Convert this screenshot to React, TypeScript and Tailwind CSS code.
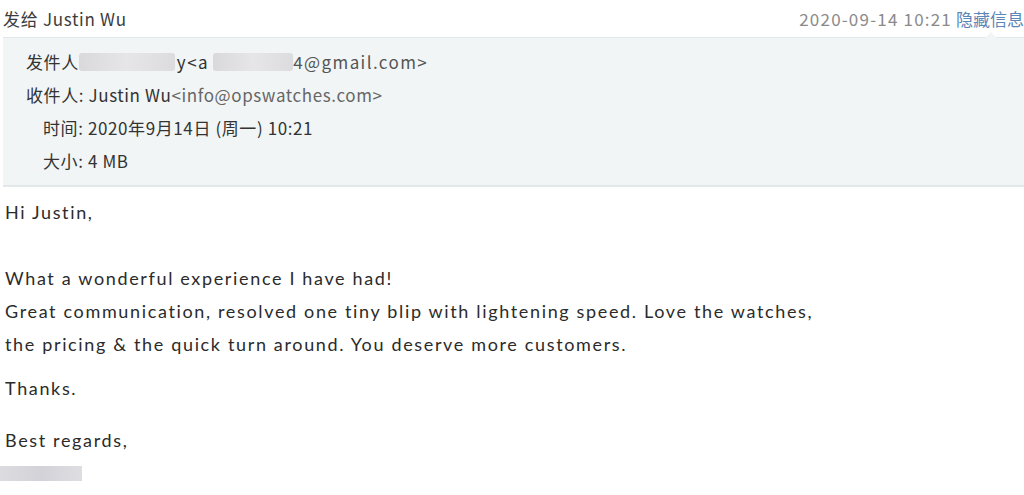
import React from "react";

const cjk = { fontFamily: '"Noto Sans CJK SC", "Noto Sans", sans-serif' };
const body = { fontFamily: 'Lato, "Noto Sans", sans-serif' };

function Blur({ w, h = 18 }: { w: number; h?: number }) {
  return (
    <span
      className="inline-block align-middle rounded-[3px] bg-gradient-to-r from-[#d9d9dc] via-[#e6e6e8] to-[#dcdcdf]"
      style={{ width: w, height: h }}
    />
  );
}

export default function App() {
  return (
    <div className="w-[1024px] h-[495px] overflow-hidden bg-white relative">
      {/* top bar */}
      <div className="flex items-center justify-between h-[37px] pl-[3px] tracking-[0.7px]" style={cjk}>
        <div className="text-[17px] text-[#3c3c3c]">发给 Justin Wu</div>
        <div className="flex items-center text-[17px] whitespace-nowrap">
          <span className="text-[#8a8a8a] tracking-[1.2px]">2020-09-14 10:21</span>
          <span className="ml-[4px] text-[#5a86b8] tracking-normal">隐藏信息</span>
        </div>
      </div>
      {/* info panel */}
      <div className="relative ml-[3px] h-[150px] bg-[#f1f5f5] border-t border-[#e1e8e8] border-b-[2px] border-b-[#e3e9e9] text-[17px] text-[#333] tracking-[0.6px]" style={cjk}>
        <div className="absolute -top-[6px] left-[982px] w-0 h-0 border-l-[6px] border-r-[6px] border-b-[6px] border-l-transparent border-r-transparent border-b-[#f1f5f5]" />
        <div className="flex flex-col pt-[7px]">
          <div className="h-[33px] flex items-center pl-[23px]">
            <span>发件人</span>
            <Blur w={96} />
            <span className="ml-[2px] tracking-[1.5px]">y&lt;a</span>
            <span className="w-[4px]" />
            <Blur w={80} />
            <span className="text-[#555] tracking-[1.4px]">4@gmail.com&gt;</span>
          </div>
          <div className="h-[33px] flex items-center pl-[23px]">
            <span>收件人: Justin Wu</span>
            <span className="text-[#666]">&lt;info@opswatches.com&gt;</span>
          </div>
          <div className="h-[33px] flex items-center pl-[40px]">
            <span>时间: 2020年9月14日 (周一) 10:21</span>
          </div>
          <div className="h-[33px] flex items-center pl-[40px]">
            <span>大小: 4 MB</span>
          </div>
        </div>
      </div>
      {/* body */}
      <div className="pl-[5px] pt-[9px] text-[18px] leading-[33px] tracking-[1.65px] text-[#2b2b2b]" style={body}>
        <div>Hi Justin,</div>
        <div className="h-[33px]" />
        <div>What a wonderful experience I have had!</div>
        <div>Great communication, resolved one tiny blip with lightening speed. Love the watches,</div>
        <div>the pricing &amp; the quick turn around. You deserve more customers.</div>
        <div className="mt-[11px]">Thanks.</div>
        <div className="mt-[19px]">Best regards,</div>
        <div className="-ml-[5px] mt-[9px] w-[82px] h-[15px] bg-gradient-to-r from-[#dcdce0] via-[#d2d2d8] to-[#dedee2]" />
      </div>
    </div>
  );
}
